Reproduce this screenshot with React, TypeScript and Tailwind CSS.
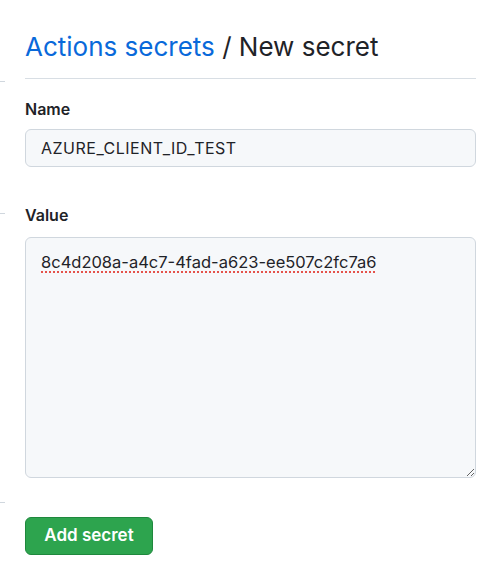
import React from 'react';

export default function App() {
  return (
    <div className="flex h-[579px] w-[496px] overflow-hidden bg-white font-['Inter','Liberation_Sans',sans-serif] text-[#1f2328]">
      {/* cropped sidebar edge */}
      <div className="flex w-[5px] shrink-0 flex-col">
        <div className="mt-[81px] h-px bg-[#d0d7de]" />
        <div className="mt-[131px] h-px bg-[#d0d7de]" />
        <div className="mt-[288px] h-px bg-[#d0d7de]" />
      </div>

      <div className="flex-1 pl-[20px] pr-[20px] pt-[30px]">
        <h1 className="border-b border-[#d8dee4] pb-[14px] text-[26px] leading-[34px] font-normal">
          <a className="text-[#0969da]">Actions secrets</a> / New secret
        </h1>

        <form className="flex flex-col items-start pt-[19px]">
          <label className="text-[16px] font-semibold leading-[23px]">Name</label>
          <div className="mt-[8px] flex h-[38px] w-[451px] items-center rounded-[6px] border border-[#d0d7de] bg-[#f6f8fa] px-[15px] text-[16px] tracking-[0.5px]">
            AZURE_CLIENT_ID_TEST
          </div>

          <label className="mt-[37px] text-[16px] font-semibold leading-[23px]">Value</label>
          <div className="mt-[10px] h-[241px] w-[451px] resize overflow-auto rounded-[6px] border border-[#d0d7de] bg-[#f6f8fa] px-[15px] pt-[12px] text-[16.5px] leading-[24px]">
            <span className="underline decoration-[#e5534b] decoration-dotted decoration-2 underline-offset-[3px]">
              8c4d208a-a4c7-4fad-a623-ee507c2fc7a6
            </span>
          </div>

          <button
            type="button"
            className="mt-[39px] flex h-[38px] w-[128px] items-center justify-center rounded-[6px] border border-[#1f883d] bg-[#2da44e] text-[17px] font-semibold text-white"
          >
            Add secret
          </button>
        </form>
      </div>
    </div>
  );
}
